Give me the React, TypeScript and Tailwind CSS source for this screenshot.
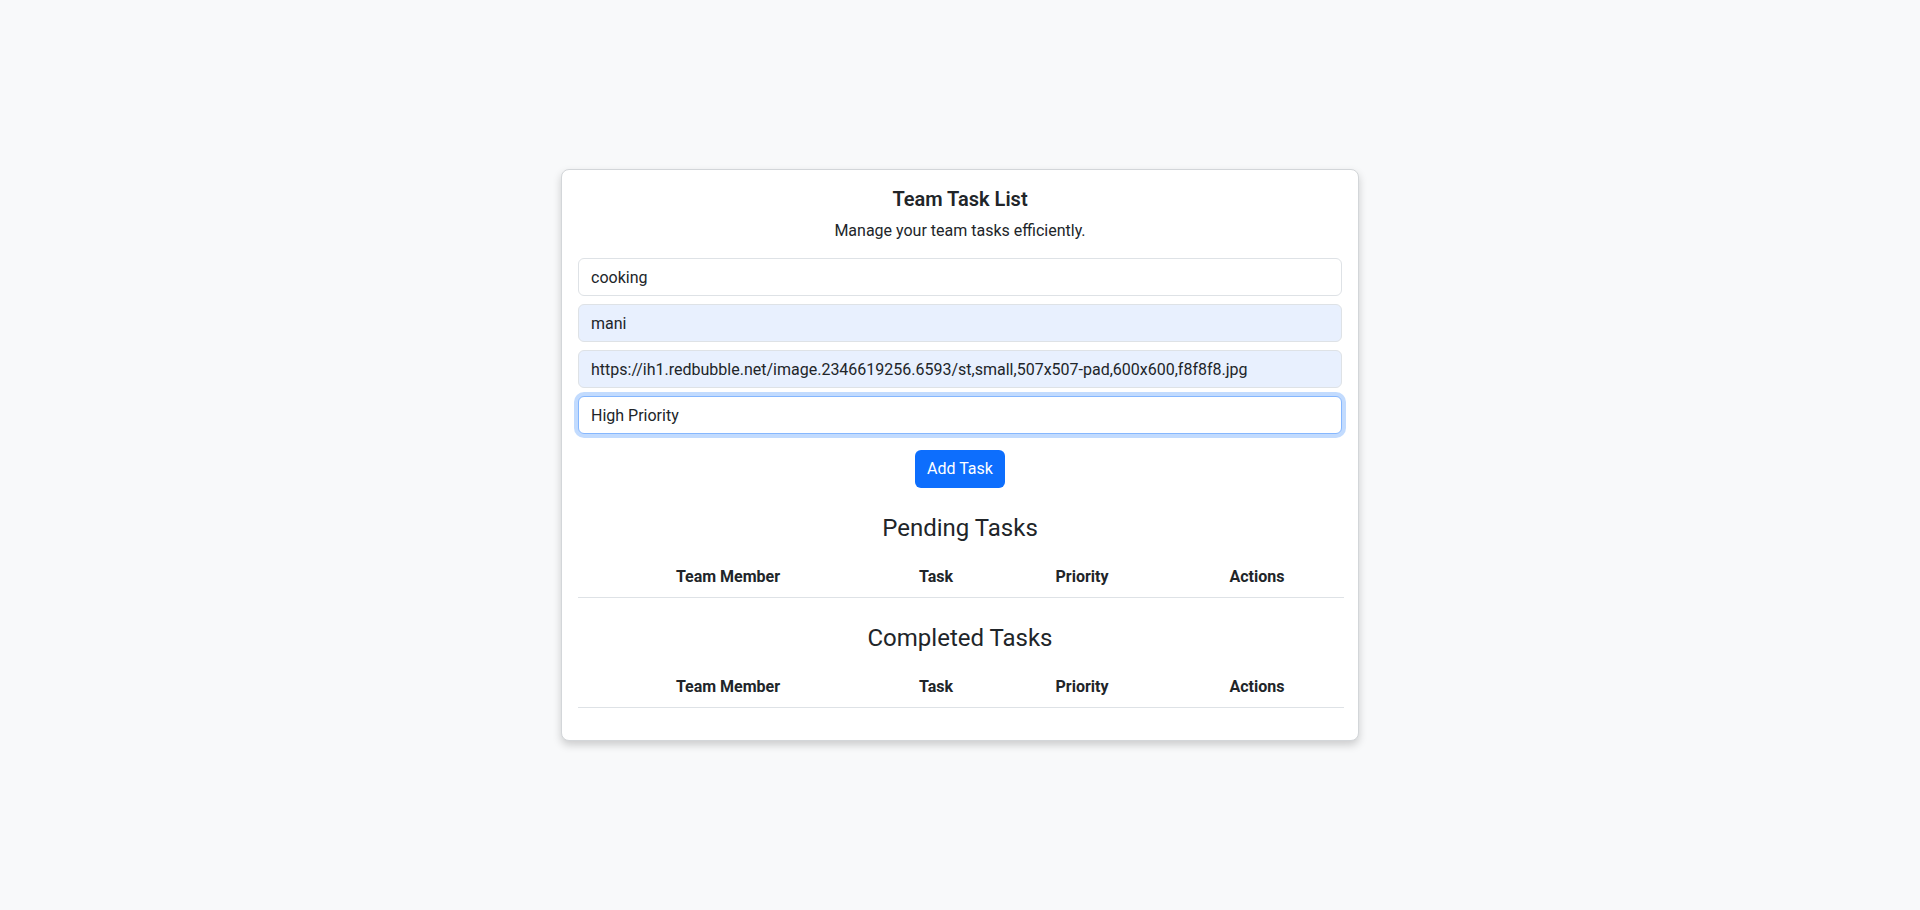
const columns = [
  { label: "Team Member", width: "w-[300px]" },
  { label: "Task", width: "w-[116px]" },
  { label: "Priority", width: "w-[176px]" },
  { label: "Actions", width: "w-[174px]" },
];

function TaskTable() {
  return (
    <table className="w-full table-fixed border-collapse mb-4">
      <thead>
        <tr className="border-b border-[#dee2e6]">
          {columns.map((col) => (
            <th key={col.label} className={`${col.width} py-2 px-2 text-center font-bold text-[16px] leading-6 text-[#212529]`}>
              {col.label}
            </th>
          ))}
        </tr>
      </thead>
      <tbody></tbody>
    </table>
  );
}

export default function App() {
  return (
    <div className="min-h-[910px] w-full bg-[#f8f9fa] flex items-center justify-center font-['Roboto',sans-serif] text-[#212529]">
      <div className="w-[798px] bg-white border border-[#d3d6d9] rounded-lg shadow-[0_4px_8px_rgba(0,0,0,0.18)] p-4">
        <h5 className="text-center text-[20px] leading-6 font-semibold mt-px mb-2">Team Task List</h5>
        <p className="text-center text-[16px] leading-6 mb-[15px]">Manage your team tasks efficiently.</p>

        <div className="flex flex-col gap-2">
          <input
            type="text"
            defaultValue="cooking"
            className="h-[38px] w-full px-3 py-1.5 text-[16px] border border-[#dee2e6] rounded-md bg-white outline-none"
          />
          <input
            type="text"
            defaultValue="mani"
            className="h-[38px] w-full px-3 py-1.5 text-[16px] border border-[#dee2e6] rounded-md bg-[#e8f0fe] outline-none"
          />
          <input
            type="text"
            defaultValue="https://ih1.redbubble.net/image.2346619256.6593/st,small,507x507-pad,600x600,f8f8f8.jpg"
            className="h-[38px] w-full px-3 py-1.5 text-[16px] border border-[#dee2e6] rounded-md bg-[#e8f0fe] outline-none"
          />
          <input
            type="text"
            defaultValue="High Priority"
            className="h-[38px] w-full px-3 py-1.5 text-[16px] border border-[#86b7fe] rounded-md bg-white outline-none shadow-[0_0_0_4px_rgba(13,110,253,0.25)]"
          />
        </div>

        <div className="flex justify-center mt-4">
          <button className="h-[38px] w-[90px] bg-[#0d6efd] text-white text-[16px] rounded-md">Add Task</button>
        </div>

        <h4 className="text-center text-[24px] leading-[29px] font-normal mt-[26px] mb-[14px]">Pending Tasks</h4>
        <TaskTable />

        <h4 className="text-center text-[24px] leading-[29px] font-normal mt-[26px] mb-[14px]">Completed Tasks</h4>
        <TaskTable />
      </div>
    </div>
  );
}
